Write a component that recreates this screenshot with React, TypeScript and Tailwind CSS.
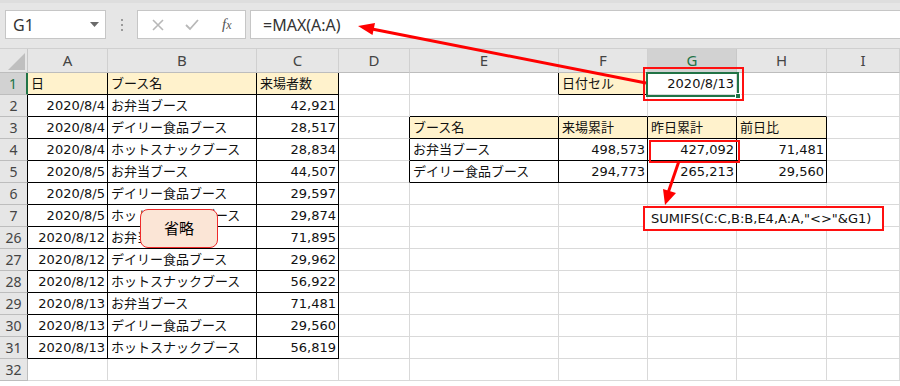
import React from "react";

const CELL_FONT = { fontFamily: '"DejaVu Sans", "Noto Sans CJK JP", sans-serif' };
const UI_FONT = { fontFamily: '"Noto Sans", "Open Sans", sans-serif' };

type Cell = { v: string; right?: boolean; yellow?: boolean };

const rowLabels = [1, 2, 3, 4, 5, 6, 7, 26, 27, 28, 29, 30, 31, 32];
const colLetters = ["A", "B", "C", "D", "E", "F", "G", "H", "I"];

const t1: [string, string, string][] = [
  ["2020/8/4", "お弁当ブース", "42,921"],
  ["2020/8/4", "デイリー食品ブース", "28,517"],
  ["2020/8/4", "ホットスナックブース", "28,834"],
  ["2020/8/5", "お弁当ブース", "44,507"],
  ["2020/8/5", "デイリー食品ブース", "29,597"],
  ["2020/8/5", "ホットスナックブース", "29,874"],
  ["2020/8/12", "お弁当ブース", "71,895"],
  ["2020/8/12", "デイリー食品ブース", "29,962"],
  ["2020/8/12", "ホットスナックブース", "56,922"],
  ["2020/8/13", "お弁当ブース", "71,481"],
  ["2020/8/13", "デイリー食品ブース", "29,560"],
  ["2020/8/13", "ホットスナックブース", "56,819"],
];

function buildGrid(): (Cell | null)[][] {
  const g: (Cell | null)[][] = rowLabels.map(() => Array(10).fill(null));
  g[0][1] = { v: "日", yellow: true };
  g[0][2] = { v: "ブース名", yellow: true };
  g[0][3] = { v: "来場者数", yellow: true };
  g[0][6] = { v: "日付セル", yellow: true };
  g[0][7] = { v: "2020/8/13", right: true };
  t1.forEach((r, i) => {
    g[i + 1][1] = { v: r[0], right: true };
    g[i + 1][2] = { v: r[1] };
    g[i + 1][3] = { v: r[2], right: true };
  });
  g[2][5] = { v: "ブース名", yellow: true };
  g[2][6] = { v: "来場累計", yellow: true };
  g[2][7] = { v: "昨日累計", yellow: true };
  g[2][8] = { v: "前日比", yellow: true };
  g[3][5] = { v: "お弁当ブース" };
  g[3][6] = { v: "498,573", right: true };
  g[3][7] = { v: "427,092", right: true };
  g[3][8] = { v: "71,481", right: true };
  g[4][5] = { v: "デイリー食品ブース" };
  g[4][6] = { v: "294,773", right: true };
  g[4][7] = { v: "265,213", right: true };
  g[4][8] = { v: "29,560", right: true };
  return g;
}

function inT(r: number, c: number) {
  return (
    (c >= 1 && c <= 3 && r >= 0 && r <= 12) ||
    (c >= 5 && c <= 8 && r >= 2 && r <= 4) ||
    (c === 6 && r === 0)
  );
}

export default function App() {
  const grid = buildGrid();
  return (
    <div className="relative w-[900px] h-[386px] overflow-hidden bg-white">
      {/* Toolbar */}
      <div className="h-[49px] bg-[#e6e6e6] border-t-[3px] border-t-[#dedede] border-b border-b-[#d0d0d0] flex items-start pt-[7px] pl-[5px]">
        <div className="w-[101px] h-[29px] bg-white border border-[#c6c6c6] flex items-center justify-between pl-[7px] pr-[6px]" style={UI_FONT}>
          <span className="text-[16px] text-[#333]">G1</span>
          <svg width="9" height="5" viewBox="0 0 9 5">
            <polygon points="0,0 9,0 4.5,5" fill="#6a6a6a" />
          </svg>
        </div>
        <div className="w-[31px] h-[29px] flex flex-col items-center justify-center gap-[3px]">
          <span className="w-[2px] h-[2px] bg-[#9a9a9a]" />
          <span className="w-[2px] h-[2px] bg-[#9a9a9a]" />
          <span className="w-[2px] h-[2px] bg-[#9a9a9a]" />
        </div>
        <div className="w-[109px] h-[29px] bg-white border border-[#c6c6c6] flex items-center">
          <svg width="14" height="14" viewBox="0 0 14 14" className="ml-[13px]">
            <path d="M2 2 L12 12 M12 2 L2 12" stroke="#b8b8b8" strokeWidth="1.6" />
          </svg>
          <svg width="16" height="14" viewBox="0 0 16 14" className="ml-[19px]">
            <path d="M2 7 L6 11 L14 2" stroke="#b8b8b8" strokeWidth="1.8" fill="none" />
          </svg>
          <span className="ml-[22px] text-[15px] italic text-[#555]" style={{ fontFamily: '"Liberation Serif", serif' }}>
            f<span className="text-[12px]">x</span>
          </span>
        </div>
        <div className="ml-[4px] flex-1 h-[29px] bg-white border border-[#c6c6c6] border-r-0 flex items-center pl-[12px]" style={UI_FONT}>
          <span className="text-[16px] text-[#333]">=MAX(A:A)</span>
        </div>
      </div>

      {/* Sheet */}
      <div className="grid grid-cols-[28px_80px_149px_82px_71px_149px_89px_89px_90px_1fr]">
        {/* corner */}
        <div className="h-[24px] bg-[#e6e6e6] border-r border-b border-r-[#c8c8c8] border-b-[#bdbdbd] flex items-end justify-end pr-[2px] pb-[2px]">
          <svg width="17" height="17" viewBox="0 0 17 17">
            <polygon points="17,0 17,17 0,17" fill="#bfbfbf" />
          </svg>
        </div>
        {colLetters.map((l, i) => (
          <div
            key={l}
            className={
              i === 6
                ? "h-[24px] bg-[#d2d2d2] border-r border-b border-r-[#c8c8c8] border-b-[#bdbdbd] flex items-center justify-center text-[15px] text-[#217346]"
                : "h-[24px] bg-[#e6e6e6] border-r border-b border-r-[#d0d0d0] border-b-[#bdbdbd] flex items-center justify-center text-[15px] text-[#444]"
            }
            style={UI_FONT}
          >
            {l}
          </div>
        ))}

        {grid.map((row, r) => (
          <React.Fragment key={r}>
            <div
              className={
                r === 0
                  ? "h-[22px] bg-[#d2d2d2] border-r-2 border-b border-r-[#217346] border-b-[#bdbdbd] flex items-center justify-center text-[14px] text-[#217346]"
                  : inT(r, 1)
                  ? "h-[22px] bg-[#e6e6e6] border-r border-b border-r-black border-b-[#bdbdbd] flex items-center justify-center text-[14px] text-[#444]"
                  : "h-[22px] bg-[#e6e6e6] border-r border-b border-r-[#bdbdbd] border-b-[#bdbdbd] flex items-center justify-center text-[14px] text-[#444]"
              }
              style={UI_FONT}
            >
              {rowLabels[r]}
            </div>
            {Array.from({ length: 9 }).map((_, ci) => {
              const c = ci + 1;
              const cell = row[c];
              const rb = inT(r, c) || inT(r, c + 1) ? "border-r-black" : "border-r-[#d9d9d9]";
              const bb = inT(r, c) || inT(r + 1, c) ? "border-b-black" : "border-b-[#d9d9d9]";
              const bg = cell?.yellow ? "bg-[#fff2cc]" : "bg-white";
              const al = cell?.right ? "justify-end pr-[2px]" : "justify-start pl-[3px]";
              return (
                <div
                  key={c}
                  className={`h-[22px] border-r border-b ${rb} ${bb} ${bg} ${al} flex items-center overflow-hidden whitespace-nowrap text-[13px] text-[#111]`}
                  style={CELL_FONT}
                >
                  {cell?.v ?? ""}
                </div>
              );
            })}
          </React.Fragment>
        ))}
      </div>

      {/* Selection on G1 */}
      <div className="absolute left-[643px] top-[67px] w-[101px] h-[34px] border-2 border-[#ff1010]" />
      <div className="absolute left-[646px] top-[72px] w-[93px] h-[25px] border-2 border-[#217346]" />
      <div className="absolute left-[735px] top-[93px] w-[6px] h-[6px] bg-[#217346] border border-white" />

      {/* G4 red box */}
      <div className="absolute left-[649px] top-[140px] w-[91px] h-[23px] border-2 border-[#ff1010]" />

      {/* SUMIFS callout */}
      <div
        className="absolute left-[643px] top-[206px] w-[241px] h-[25px] bg-white border-2 border-[#ff1010] flex items-center pl-[6px] text-[13px] text-[#111] whitespace-nowrap"
        style={CELL_FONT}
      >
        SUMIFS(C:C,B:B,E4,A:A,"&lt;&gt;"&amp;G1)
      </div>

      {/* 省略 box */}
      <div
        className="absolute left-[140px] top-[209px] w-[78px] h-[39px] rounded-[8px] bg-[#fbe5d6] border border-[#ee2a2a] flex items-center justify-center text-[15px] text-black"
        style={{ fontFamily: '"Noto Sans CJK JP", sans-serif' }}
      >
        省略
      </div>

      {/* Arrows */}
      <svg className="absolute left-0 top-0 pointer-events-none" width="900" height="386" viewBox="0 0 900 386">
        <line x1="646" y1="83" x2="372" y2="29" stroke="#ff0000" strokeWidth="3" />
        <polygon points="358,26 375,23 372.5,35" fill="#ff0000" />
        <line x1="679" y1="161" x2="668" y2="193" stroke="#ff0000" strokeWidth="3" />
        <polygon points="665,205 676,193 663,189" fill="#ff0000" />
      </svg>
    </div>
  );
}
